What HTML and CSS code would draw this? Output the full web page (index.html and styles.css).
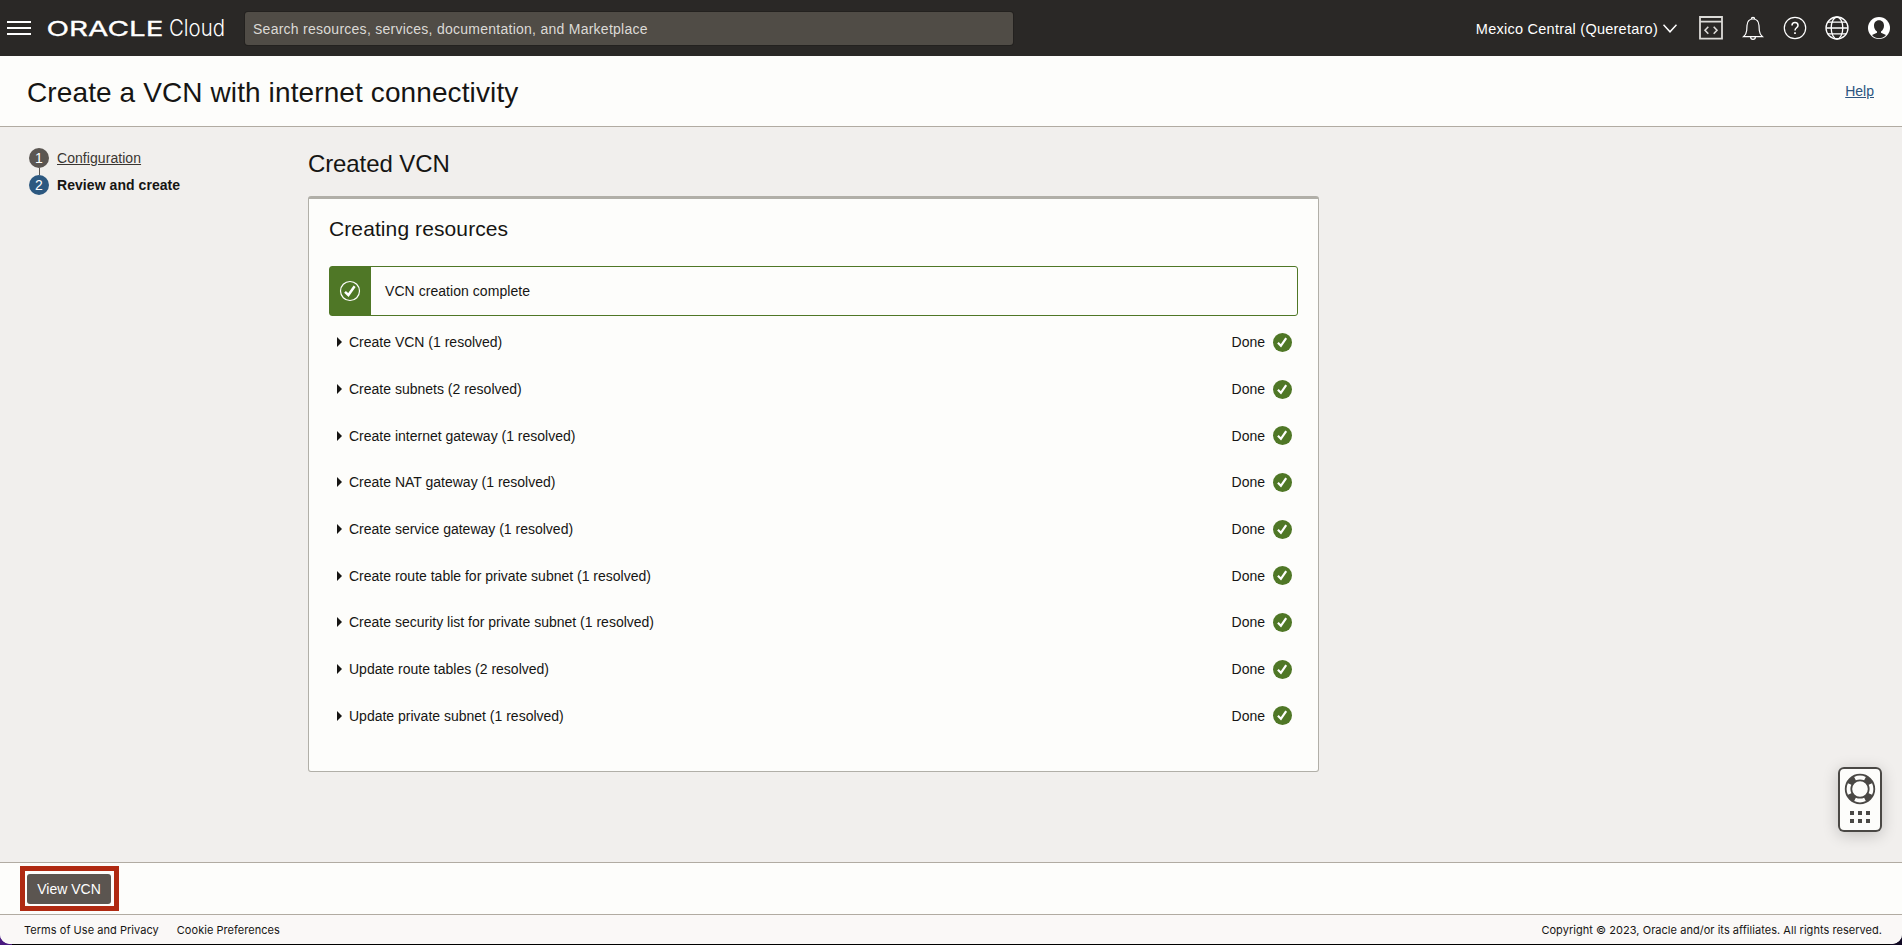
FILE: index.html
```html
<!DOCTYPE html>
<html lang="en">
<head>
<meta charset="utf-8">
<title>Create a VCN with internet connectivity</title>
<link rel="stylesheet" href="styles.css">
</head>
<body>
<div class="page">
  <header class="topbar">
    <svg class="menu" width="24" height="16" viewBox="0 0 24 16"><path d="M0 2h24M0 8h24M0 14h24" stroke="#fff" stroke-width="2"/></svg>
    <svg class="logo" width="180" height="30" viewBox="0 0 180 30">
      <text class="logo-oracle" x="-1.500" y="23" textLength="117" lengthAdjust="spacingAndGlyphs">ORACLE</text>
      <text class="logo-cloud" x="121" y="23" textLength="56" lengthAdjust="spacingAndGlyphs">Cloud</text>
    </svg>
    <div class="search">Search resources, services, documentation, and Marketplace</div>
    <div class="region"><span>Mexico Central (Queretaro)</span>
      <svg width="14" height="9" viewBox="0 0 14 9"><path d="M.5 .8l6.500 7L13.500.8" fill="none" stroke="#fff" stroke-width="1.500"/></svg>
    </div>
    <div class="tools">
      <svg width="24" height="24" viewBox="0 0 24 24" fill="none" stroke="#dcdbd8" stroke-width="1.800"><path d="M1 1h22v21.600H1zM1 5.700h22"/><path d="M9.300 10.800L6 14.300l3.300 3.500M14.700 10.800l3.300 3.500-3.300 3.500" stroke-width="1.600"/></svg>
      <svg width="24" height="24" viewBox="0 0 24 24" fill="none" stroke="#fff" stroke-width="1.200"><path d="M2.500 20.700h19c-1.800-1.700-3-3.500-3.200-6.200l-.3-5C17.700 5.300 15.300 3 12 3S6.300 5.300 6 9.500l-.3 5c-.2 2.700-1.400 4.500-3.200 6.200zM10.300 3a1.700 1.700 0 1 1 3.400 0M9.600 21a2.400 2.400 0 0 0 4.800 0"/></svg>
      <svg width="24" height="24" viewBox="0 0 24 24" fill="none" stroke="#fff" stroke-width="1.200"><circle cx="12" cy="12" r="10.700"/><path d="M9 9.600c0-1.900 1.300-3 3-3s3 1.100 3 2.800c0 2.200-3 2.500-3 5" stroke-width="1.500"/><path d="M12 16.200v1.700" stroke-width="1.700"/></svg>
      <svg width="24" height="24" viewBox="0 0 24 24" fill="none" stroke="#fff" stroke-width="1.300"><circle cx="12" cy="12" r="11"/><ellipse cx="12" cy="12" rx="5.800" ry="11"/><path d="M1 12h22M3 6.200h18M3 17.800h18"/></svg>
      <svg width="24" height="24" viewBox="0 0 24 24"><circle cx="12" cy="12" r="11" fill="#fff"/><path d="M12 4.200c-3.200 0-5 2.300-5 5.300 0 2.600 1.200 5 3 6v1.300l-5 2.200C6.800 21.100 9.300 22.200 12 22.200s5.200-1.100 7-3.200l-5-2.200v-1.300c1.800-1 3-3.400 3-6 0-3-1.800-5.300-5-5.300z" fill="#2a2826"/></svg>
    </div>
  </header>

  <div class="titlebar">
    <h1>Create a VCN with internet connectivity</h1>
    <a class="help">Help</a>
  </div>

  <div class="content">
    <nav class="steps">
      <div class="step"><span class="num">1</span><a>Configuration</a></div>
      <div class="link"></div>
      <div class="step current"><span class="num">2</span><b>Review and create</b></div>
    </nav>
    <main>
      <h2>Created VCN</h2>
      <section class="card">
        <h3>Creating resources</h3>
        <div class="alert">
          <div class="alert-icon"><svg width="22" height="22" viewBox="0 0 22 22" fill="none" stroke="#fff"><circle cx="11" cy="11" r="9.500" stroke-width="1.200"/><path d="M6 11.800l3.400 3.200 6.200-8.800" stroke-width="2.500"/></svg></div>
          <span>VCN creation complete</span>
        </div>
        <div class="rows" id="rows"></div>
      </section>
    </main>
    <div class="support">
      <svg width="44" height="65" viewBox="0 0 44 65">
        <circle cx="22" cy="22" r="11.500" fill="none" stroke="#4a4845" stroke-width="7.400"/>
        <circle cx="22" cy="22" r="11.500" fill="none" stroke="#fdfdfb" stroke-width="3.800" pathLength="8" stroke-dasharray="1.150 .85" stroke-dashoffset=".575"/>
        <path d="M12 44h4v4h-4zM20 44h4v4h-4zM28 44h4v4h-4zM12 52h4v4h-4zM20 52h4v4h-4zM28 52h4v4h-4z" fill="#4a4845"/>
      </svg>
    </div>
  </div>

  <div class="actions"><div class="highlight"><button>View VCN</button></div></div>
  <footer>
    <span class="terms">Terms of Use and Privacy</span><span class="cookies">Cookie Preferences</span>
    <span class="copy">Copyright © 2023, Oracle and/or its affiliates. All rights reserved.</span>
  </footer>
</div>
<script src="rows.js"></script>
</body>
</html>
```
FILE: rows.js
```
const tasks = [
  "Create VCN (1 resolved)",
  "Create subnets (2 resolved)",
  "Create internet gateway (1 resolved)",
  "Create NAT gateway (1 resolved)",
  "Create service gateway (1 resolved)",
  "Create route table for private subnet (1 resolved)",
  "Create security list for private subnet (1 resolved)",
  "Update route tables (2 resolved)",
  "Update private subnet (1 resolved)"
];
document.getElementById("rows").innerHTML = tasks.map(t => `
  <div class="row">
    <svg class="caret" width="5" height="10" viewBox="0 0 5 10"><path d="M0 0l5 5-5 5z" fill="#161513"/></svg>
    <span class="name">${t}</span>
    <span class="done">Done</span>
    <svg width="19" height="19" viewBox="0 0 19 19"><circle cx="9.500" cy="9.500" r="9.500" fill="#4f7726"/><path d="M4.900 9.800l3 3 5.300-7.600" fill="none" stroke="#fff" stroke-width="2.200"/></svg>
  </div>`).join("");
```
FILE: styles.css
```css
* { box-sizing: border-box; }
body { margin: 0; background: linear-gradient(90deg, #4a1a80 0 12px, #000 12px 1890px, #120a24 1890px); font-family: "Liberation Sans", Arial, sans-serif; font-size: 14px; color: #161513; }
.page { height: 944px; display: flex; flex-direction: column; border-radius: 0 0 10px 10px; overflow: hidden; background: #fdfdfb; }
svg { display: block; flex: none; }
h1, h2, h3 { margin: 0; font-weight: 400; }

.topbar { height: 56px; flex: none; background: #2a2826; color: #fff; display: flex; align-items: center; padding: 0 11px 0 7px; }
.logo { margin: 0 0 0 17px; overflow: visible; }
.logo text { fill: #fff; }
.logo-oracle { font: 400 20.500px Inter, sans-serif; stroke: #fff; stroke-width: .3px; }
.logo-cloud { font: 300 22.500px Inter, sans-serif; }
.search { width: 768px; height: 33px; margin-left: 17px; padding: 1px 0 0 8px; line-height: 33px; border-radius: 3px; background: #504c46; color: #dcdad6; letter-spacing: .260px; box-shadow: 0 0 0 1px #23211f; }
.region { margin-left: auto; display: flex; align-items: center; gap: 5px; font-size: 14.500px; letter-spacing: .250px; }
.region span { padding-top: 1px; }
.tools { display: flex; gap: 18px; margin-left: 22px; }

.titlebar { height: 71px; flex: none; border-bottom: 1px solid #b1aba2; display: flex; align-items: center; justify-content: space-between; padding: 0 28px 0 27px; }
h1 { font-size: 28px; letter-spacing: .110px; padding-top: 3px; }
.help { color: #2c5580; text-decoration: underline; }

.content { flex: 1; min-height: 0; background: #f1efed; display: flex; position: relative; }
.steps { width: 308px; padding: 21px 0 0 29px; }
.step { display: flex; align-items: center; gap: 8px; height: 20px; letter-spacing: .060px; }
.step a { text-decoration: underline; color: #3a3632; }
.num { width: 20px; height: 20px; border-radius: 50%; background: #5b5652; color: #fff; text-align: center; line-height: 20px; }
.current .num { background: #2c5880; }
.link { width: 1px; height: 7px; margin-left: 10px; background: #5b5652; }
main { width: 1011px; padding-top: 21px; }
h2 { font-size: 24px; line-height: 32px; height: 48px; letter-spacing: -.1px; }
.card { height: 576px; border: 1px solid #b1afa8; border-top-width: 3px; border-radius: 3px; background: #fdfdfb; padding: 17px 20px; }
h3 { font-size: 21px; line-height: 26px; letter-spacing: .1px; }
.alert { height: 50px; margin-top: 24px; border: 1px solid #4f7726; border-radius: 3px; display: flex; align-items: center; gap: 14px; letter-spacing: .050px; }
.alert-icon { width: 41px; height: 100%; padding-right: 2px; background: #4f7726; display: grid; place-items: center; }
.rows { padding: 3px 6px 0 8px; }
.row { height: 46.700px; display: flex; align-items: center; }
.name { margin-left: 7px; flex: 1; }
.done { margin-right: 8px; }
.support { position: absolute; right: 20px; bottom: 30px; width: 44px; height: 65px; border-radius: 6px; background: #fdfdfb; box-shadow: inset 0 0 0 2px #4a4845, 0 3px 16px #0003; }

.actions { height: 52px; flex: none; border-top: 1px solid #b1aba2; padding: 3px 0 0 20px; }
.highlight { width: 99px; height: 45px; border: 5px solid #b02a12; padding: 3px 2px 2px; }
button { display: block; width: 84px; height: 30px; border: 0; border-radius: 3px; padding: 0; background: #5b5550; color: #fff; font: 14px "Liberation Sans", sans-serif; }
footer { height: 30px; flex: none; border-top: 1px solid #b1aba2; background: #faf8f7; display: flex; align-items: center; padding: 1px 20px 0 24px; font: 11px Inter, sans-serif; letter-spacing: .040px; }
.cookies { margin-left: 18px; }
.copy { margin-left: auto; }
```
